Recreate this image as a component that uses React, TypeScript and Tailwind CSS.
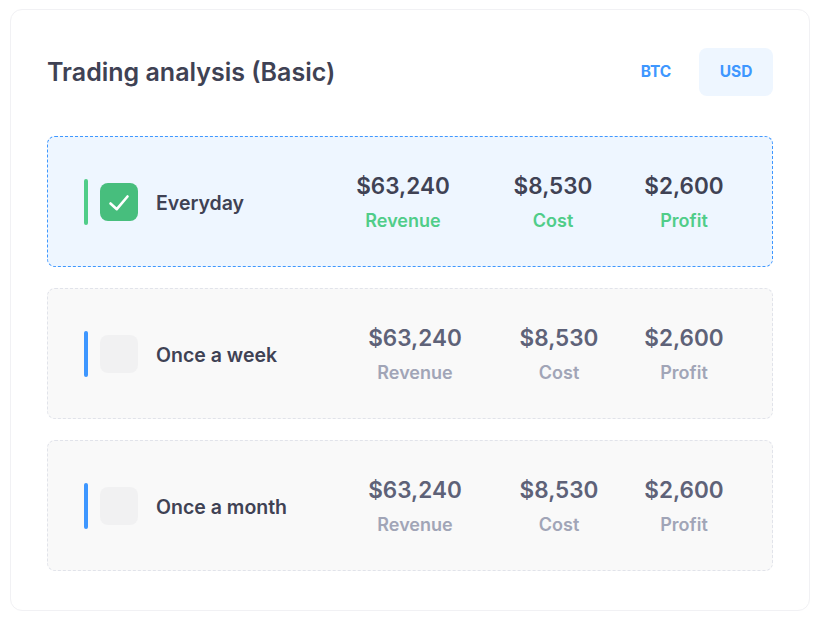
import React from "react";

type Plan = {
  name: string;
  selected: boolean;
  cols: [string, string, string];
};

const plans: Plan[] = [
  { name: "Everyday", selected: true, cols: ["w-[142px]", "w-[158px]", "w-[104px]"] },
  { name: "Once a week", selected: false, cols: ["w-[142px]", "w-[146px]", "w-[104px]"] },
  { name: "Once a month", selected: false, cols: ["w-[142px]", "w-[146px]", "w-[104px]"] },
];

const stats = [
  { value: "$63,240", label: "Revenue" },
  { value: "$8,530", label: "Cost" },
  { value: "$2,600", label: "Profit" },
];

function Check() {
  return (
    <svg width="38" height="38" viewBox="0 0 38 38" fill="none">
      <path
        d="M10.5 20.5L16.8 26.2L27.5 13.5"
        stroke="white"
        strokeWidth="2.6"
        strokeLinecap="round"
        strokeLinejoin="round"
      />
    </svg>
  );
}

function PlanRow({ plan }: { plan: Plan }) {
  const sel = plan.selected;
  return (
    <div
      className={`flex items-center h-[131px] px-9 rounded-lg border border-dashed ${
        sel ? "bg-[#eef6ff] border-[#3e97ff]" : "bg-[#f9f9f9] border-[#e1e3ea]"
      }`}
    >
      {/* left: bar, checkbox, label */}
      <div className="flex-1 flex items-center">
        <span className={`w-1 h-[46px] rounded-full ${sel ? "bg-[#50cd89]" : "bg-[#3e97ff]"}`} />
        <span
          className={`ml-3 w-[38px] h-[38px] rounded-lg flex items-center justify-center ${
            sel ? "bg-[#47be7d]" : "bg-[#f1f1f2]"
          }`}
        >
          {sel && <Check />}
        </span>
        <span className="ml-[18px] mt-1 text-[19.5px] font-semibold text-[#3f4254]">{plan.name}</span>
      </div>

      {/* stats */}
      <div className="flex mt-0.5">
        {stats.map((s, i) => (
          <div key={s.label} className={`${plan.cols[i]} flex flex-col items-center`}>
            <span
              className={`text-[22.5px] leading-[28px] font-semibold ${
                sel ? "text-[#3f4254]" : "text-[#5e6278]"
              }`}
            >
              {s.value}
            </span>
            <span
              className={`mt-2 text-[18px] leading-[26px] font-semibold ${
                sel ? "text-[#50cd89]" : "text-[#a1a5b7]"
              }`}
            >
              {s.label}
            </span>
          </div>
        ))}
      </div>
    </div>
  );
}

export default function App() {
  return (
    <div className="min-h-[622px] bg-white pt-[9px] pl-[10px] font-['Inter',sans-serif]">
      <div className="w-[800px] rounded-xl border border-[#f1f1f4] bg-white px-9 pt-[38px] pb-[39px]">
        {/* header */}
        <div className="flex items-center justify-between h-12">
          <h2 className="mt-0.5 text-[25px] font-semibold text-[#3f4254]">Trading analysis (Basic)</h2>
          <div className="flex items-center gap-[6px]">
            <button className="w-[74px] h-12 rounded-lg text-[15.5px] font-bold text-[#3e97ff]">BTC</button>
            <button className="w-[74px] h-12 rounded-lg bg-[#eef6ff] text-[15.5px] font-bold text-[#3e97ff]">
              USD
            </button>
          </div>
        </div>

        {/* plans */}
        <div className="mt-10 flex flex-col gap-[21px]">
          {plans.map((p) => (
            <PlanRow key={p.name} plan={p} />
          ))}
        </div>
      </div>
    </div>
  );
}
